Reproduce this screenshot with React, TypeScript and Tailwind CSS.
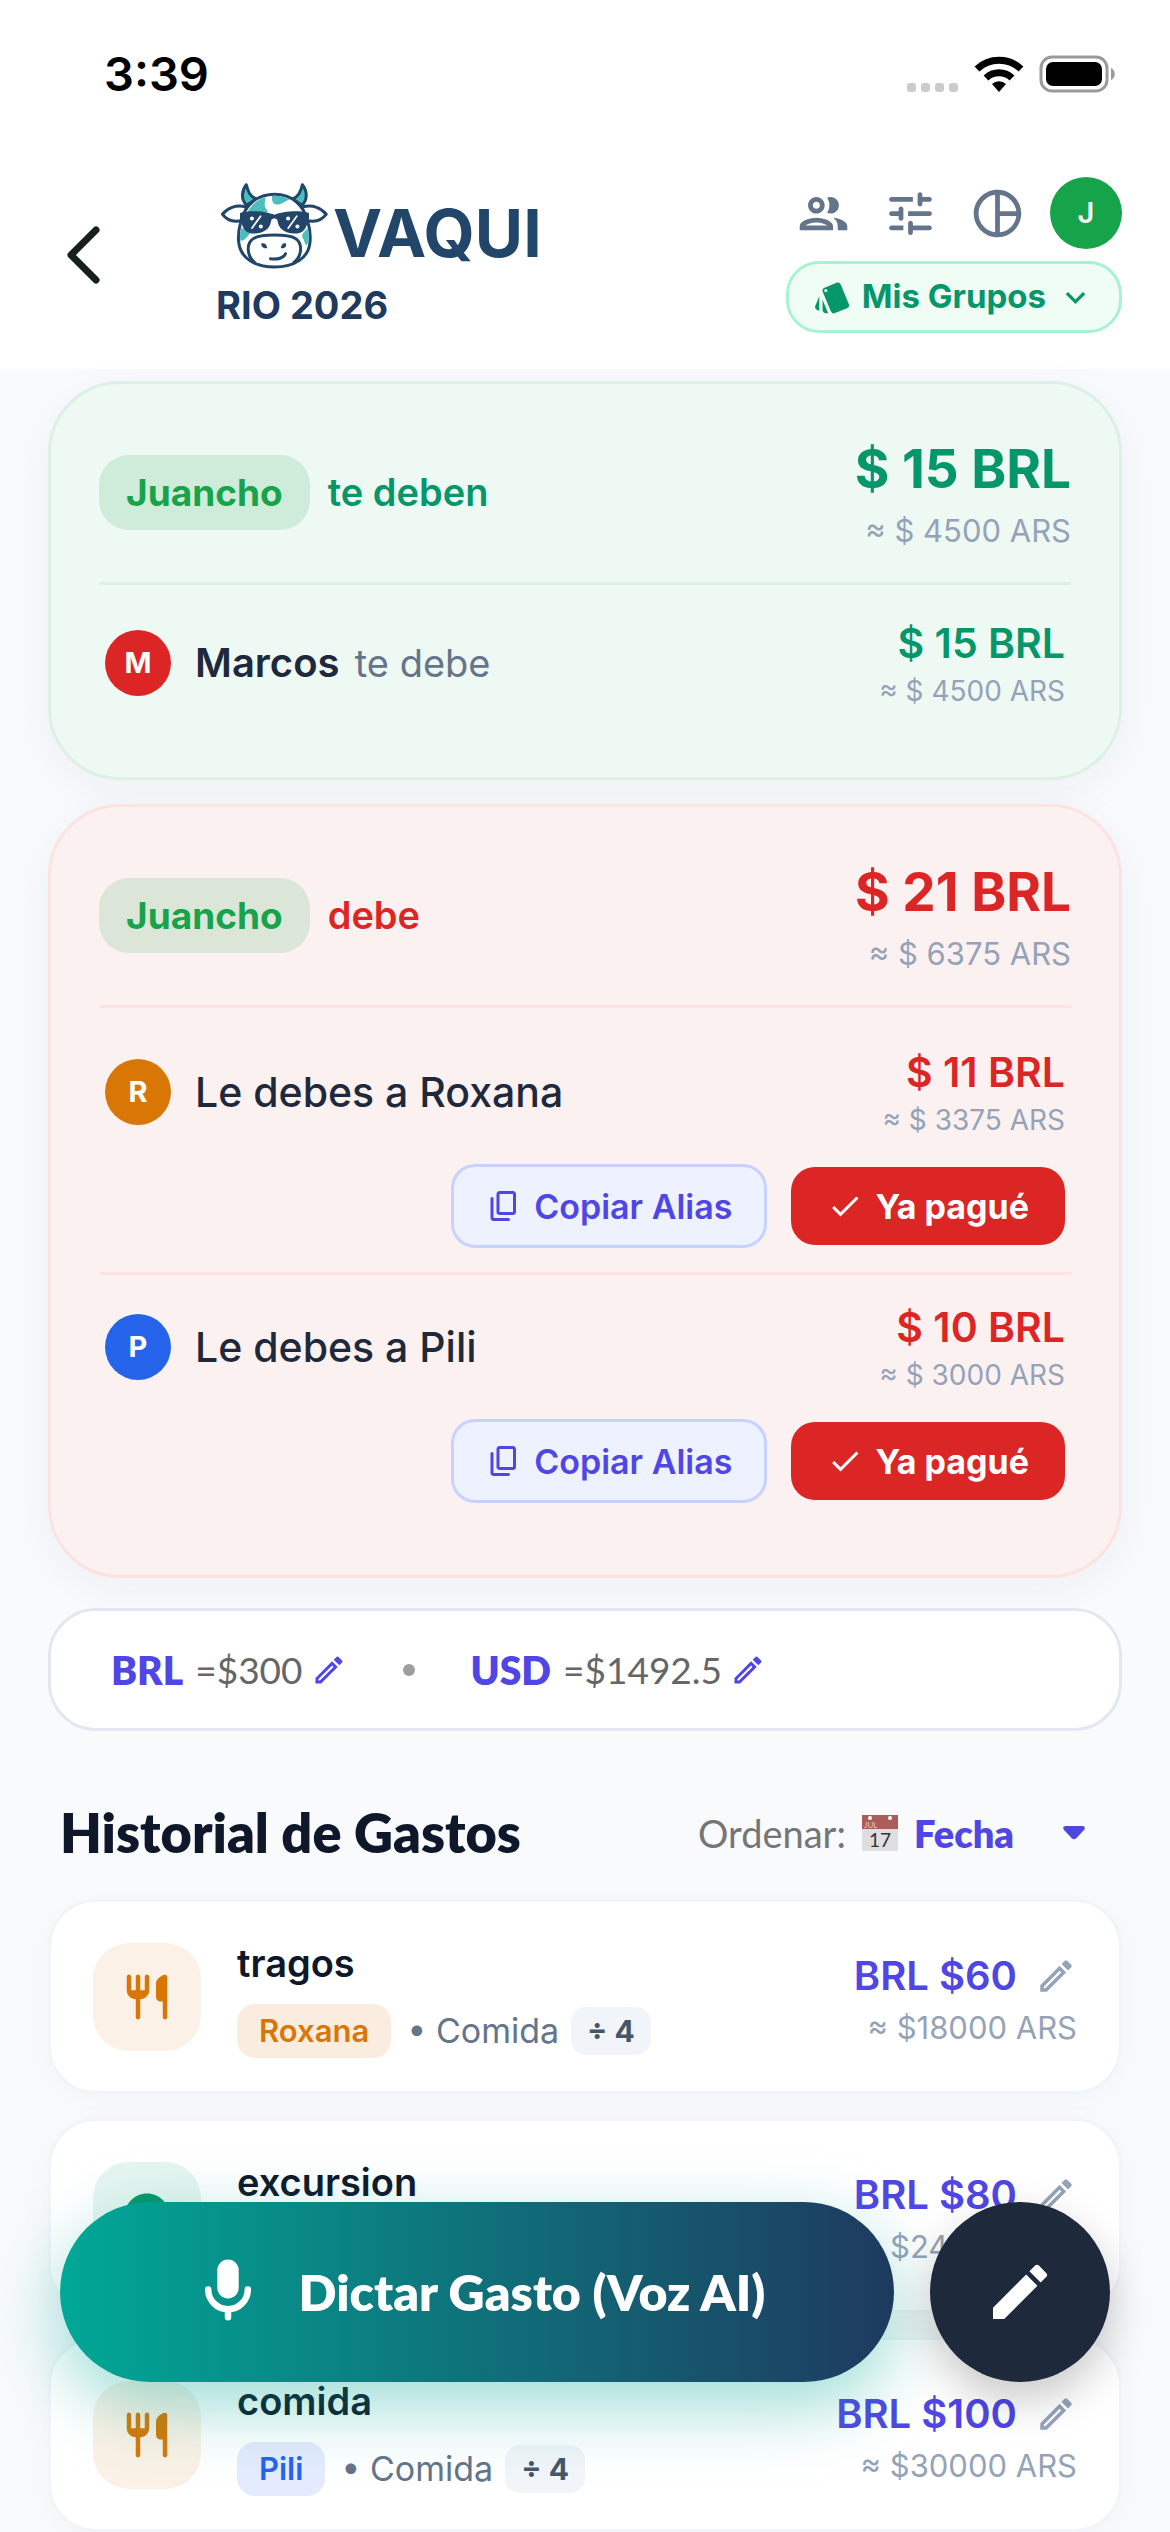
import type { ReactNode } from 'react';
import {
  MdCheck,
  MdExplore,
  MdKeyboardArrowDown,
  MdModeEdit,
  MdOutlineModeEdit,
  MdPieChartOutline,
  MdStyle,
} from 'react-icons/md';

type Tone = 'green' | 'red';

const toneCard = {
  green: 'bg-[#eef9f3] border-[#dcf0e6]',
  red: 'bg-[#fcf1f1] border-[#fde2e2]',
};
const toneLine = { green: 'border-[#dcf0e6]', red: 'border-[#fde2e2]' };
const toneText = { green: 'text-[#059669]', red: 'text-[#dc2626]' };

const debts = [
  { name: 'Roxana', initial: 'R', color: 'bg-[#d97706]', amount: '$ 11 BRL', ars: '≈ $ 3375 ARS' },
  { name: 'Pili', initial: 'P', color: 'bg-[#2563eb]', amount: '$ 10 BRL', ars: '≈ $ 3000 ARS' },
];

type Expense = {
  title: string;
  tile: string;
  icon: ReactNode;
  amount: string;
  ars: string;
  detail?: { payer: string; chip: string; category: string; split: string };
};

const expenses: Expense[] = [
  {
    title: 'tragos',
    tile: 'bg-[#fbf1e6] text-[#d97706]',
    icon: <ForkKnife />,
    amount: 'BRL $60',
    ars: '≈ $18000 ARS',
    detail: { payer: 'Roxana', chip: 'bg-[#faeddf] text-[#d97706]', category: 'Comida', split: '÷ 4' },
  },
  {
    title: 'excursion',
    tile: 'bg-[#e6f5f0] text-[#059669]',
    icon: <MdExplore className="size-[54px]" />,
    amount: 'BRL $80',
    ars: '≈ $24000 ARS',
  },
  {
    title: 'comida',
    tile: 'bg-[#fbf1e6] text-[#d97706]',
    icon: <ForkKnife />,
    amount: 'BRL $100',
    ars: '≈ $30000 ARS',
    detail: { payer: 'Pili', chip: 'bg-[#e5ebfe] text-[#2563eb]', category: 'Comida', split: '÷ 4' },
  },
];

function ForkKnife() {
  return (
    <svg viewBox="0 0 24 24" className="size-[54px]" fill="currentColor" aria-hidden="true">
      <path d="M16 6v6c0 1.1.9 2 2 2h1v7c0 .55.45 1 1 1s1-.45 1-1V3.13c0-.65-.61-1.13-1.24-.98C17.6 2.68 16 4.51 16 6zm-5 3H9V3c0-.55-.45-1-1-1s-1 .45-1 1v6H5V3c0-.55-.45-1-1-1s-1 .45-1 1v6c0 2.21 1.79 4 4 4v8c0 .55.45 1 1 1s1-.45 1-1v-8c2.21 0 4-1.79 4-4V3c0-.55-.45-1-1-1s-1 .45-1 1v6z" />
    </svg>
  );
}

function PeopleIcon() {
  return (
    <svg viewBox="0 0 24 24" className="size-[57px]" fill="currentColor" aria-hidden="true">
      <path d="M9 13.75c-2.34 0-7 1.17-7 3.5V19h14v-1.75c0-2.33-4.66-3.5-7-3.5zM4.34 17c.84-.58 2.87-1.25 4.66-1.25s3.82.67 4.66 1.25H4.34zM9 12c1.93 0 3.5-1.57 3.5-3.5S10.93 5 9 5 5.5 6.57 5.5 8.5 7.07 12 9 12zm0-5c.83 0 1.5.67 1.5 1.5S9.83 10 9 10s-1.5-.67-1.5-1.5S8.17 7 9 7zm7.04 6.81c1.16.84 1.96 1.96 1.96 3.44V19h4v-1.75c0-2.02-3.5-3.17-5.96-3.44zM15 12c1.93 0 3.5-1.57 3.5-3.5S16.93 5 15 5c-.54 0-1.04.13-1.5.35.63.89 1 1.98 1 3.15s-.37 2.26-1 3.15c.46.22.96.35 1.5.35z" />
    </svg>
  );
}

function TuneIcon() {
  return (
    <svg viewBox="0 0 24 24" className="size-[57px]" fill="currentColor" aria-hidden="true">
      <path d="M3 18c0 .55.45 1 1 1h5v-2H4c-.55 0-1 .45-1 1zM3 6c0 .55.45 1 1 1h9V5H4c-.55 0-1 .45-1 1zm10 14v-1h7c.55 0 1-.45 1-1s-.45-1-1-1h-7v-1c0-.55-.45-1-1-1s-1 .45-1 1v4c0 .55.45 1 1 1s1-.45 1-1zM7 10v1H4c-.55 0-1 .45-1 1s.45 1 1 1h3v1c0 .55.45 1 1 1s1-.45 1-1v-4c0-.55-.45-1-1-1s-1 .45-1 1zm14 2c0-.55-.45-1-1-1h-9v2h9c.55 0 1-.45 1-1zm-5-3c.55 0 1-.45 1-1V7h3c.55 0 1-.45 1-1s-.45-1-1-1h-3V4c0-.55-.45-1-1-1s-1 .45-1 1v4c0 .55.45 1 1 1z" />
    </svg>
  );
}

function CopyIcon() {
  return (
    <svg viewBox="0 0 24 24" className="size-9" fill="currentColor" aria-hidden="true">
      <path d="M9 18q-.825 0-1.4125-.5875T7 16V4q0-.825.5875-1.4125T9 2h9q.825 0 1.4125.5875T20 4v12q0 .825-.5875 1.4125T18 18H9Zm0-2h9V4H9v12Zm-4 6q-.825 0-1.4125-.5875T3 20V7q0-.425.2875-.7125T4 6q.425 0 .7125.2875T5 7v13h10q.425 0 .7125.2875T16 21q0 .425-.2875.7125T15 22H5Z" />
    </svg>
  );
}

function MicIcon() {
  return (
    <svg viewBox="0 0 24 24" className="size-[78px]" fill="currentColor" aria-hidden="true">
      <rect x="8.7" y="2" width="6.6" height="12" rx="3.3" />
      <path d="M5.900 11.2a6.100 6.100 0 0 0 12.200 0M12 17.500V19.800" fill="none" stroke="currentColor" strokeWidth="2" strokeLinecap="round" />
    </svg>
  );
}

function CowLogo() {
  return (
    <svg viewBox="58 50 326 262" className="h-[87px] w-[109px]" aria-hidden="true">
      <g fill="#fff" stroke="#21466a" strokeWidth="9" strokeLinejoin="round" strokeLinecap="round">
        <path d="M136 58C120 80 121 104 137 120L166 101C147 94 141 78 136 58Z" fill="#4dbdbe" />
        <path d="M305 58C321 80 320 104 304 120L275 101C294 94 300 78 305 58Z" fill="#4dbdbe" />
        <path d="M137 126C104 116 78 130 64 147C78 166 100 173 126 165Z" />
        <path d="M304 126C337 116 363 130 377 147C363 166 341 173 315 165Z" />
        <path d="M221 87C170 87 130 118 118 175C112 198 111 210 113 230C118 280 162 306 221 306C280 306 324 280 328 230C330 210 329 198 323 175C311 118 272 87 221 87Z" />
      </g>
      <g fill="#4dbdbe">
        <path d="M194 95C168 103 146 124 140 142L198 142C208 138 188 132 192 112Z" />
        <path d="M214 92C211 112 221 121 237 117C251 113 252 108 267 103C252 94 232 90 214 92Z" />
        <path d="M121 188C117 204 116 214 118 227C136 226 141 210 149 203Z" />
        <path d="M322 190C308 201 300 209 307 220C313 229 311 240 319 240C326 225 326 208 322 190Z" />
      </g>
      <g fill="none" stroke="#21466a" strokeWidth="9" strokeLinecap="round">
        <path d="M163 294C138 276 134 234 158 220C180 206 262 206 284 220C307 234 304 276 278 294" fill="#fff" />
        <path d="M209 281C230 284 249 279 254 266" />
      </g>
      <g fill="#21466a">
        <path d="M117 143C145 134 197 138 221 149C245 138 296 134 325 143L325 160C318 168 322 200 290 205C252 208 233 190 230 166C226 158 215 158 211 166C208 190 189 208 152 205C120 200 124 168 117 160Z" />
        <path d="M181 236C188 232 198 236 199 249C191 252 180 246 181 236Z" />
        <path d="M256 236C249 232 241 238 240 249C249 252 258 246 256 236Z" />
      </g>
      <g stroke="#fff" strokeWidth="5" strokeLinecap="round">
        <path d="M153 189L179 153M262 189L288 153" />
      </g>
      <g fill="#fff">
        <circle cx="153" cy="160" r="6" />
        <circle cx="180" cy="184" r="6" />
        <circle cx="262" cy="160" r="6" />
        <circle cx="290" cy="184" r="6" />
      </g>
    </svg>
  );
}

function StatusBar() {
  return (
    <div className="flex h-[141px] items-center justify-between pt-[6px] pr-[54px] pl-[104px]">
      <span className="text-[47px] leading-none font-semibold text-black">3:39</span>
      <svg viewBox="0 0 210 38" className="h-[38px] w-[210px]" aria-hidden="true">
        <g fill="#cbcbcb">
          <rect x="1" y="28" width="9" height="9" rx="3" />
          <rect x="15" y="28" width="9" height="9" rx="3" />
          <rect x="29" y="28" width="9" height="9" rx="3" />
          <rect x="43" y="28" width="9" height="9" rx="3" />
        </g>
        <g fill="none" stroke="#000" strokeWidth="7">
          <path d="M71 14A32 32 0 0 1 115 14" />
          <path d="M80 23A19 19 0 0 1 106 23" />
        </g>
        <path d="M86 29A10 10 0 0 1 100 29L93 37Z" fill="#000" />
        <rect x="135" y="2" width="66" height="34" rx="11" fill="none" stroke="#9a9a9a" strokeWidth="3" />
        <rect x="140" y="7" width="56" height="24" rx="7" fill="#000" />
        <path d="M205 13C210 15 210 23 205 25Z" fill="#9a9a9a" />
      </svg>
    </div>
  );
}

function Header() {
  return (
    <header className="bg-white">
      <StatusBar />
      <div className="flex items-center justify-between py-9 pr-12 pl-[60px]">
        <div className="flex items-center">
          <button type="button" aria-label="Volver" className="w-[156px] text-[#17201c]">
            <svg viewBox="0 0 48 66" className="h-[66px] w-12" fill="none" stroke="currentColor" strokeWidth="7" strokeLinecap="round" strokeLinejoin="round">
              <path d="M36 8L11 33L36 58" />
            </svg>
          </button>
          <div className="flex flex-col gap-3">
            <div className="flex items-end gap-1 pl-1">
              <CowLogo />
              <span className="text-[66px] leading-[72px] font-bold text-[#21466a]">VAQUI</span>
            </div>
            <h1 className="text-[38px] leading-[48px] font-bold text-[#1e3a5f]">RIO 2026</h1>
          </div>
        </div>
        <div className="flex flex-col items-end gap-3">
          <div className="flex items-center gap-6 text-[#64748b]">
            <div className="flex items-center gap-[30px]">
              <button type="button" aria-label="Miembros">
                <PeopleIcon />
              </button>
              <button type="button" aria-label="Ajustes">
                <TuneIcon />
              </button>
              <button type="button" aria-label="Estadísticas">
                <MdPieChartOutline className="size-[57px]" />
              </button>
            </div>
            <button type="button" className="flex size-[72px] items-center justify-center rounded-full bg-[#16a34a] text-[29px] font-semibold text-white">
              J
            </button>
          </div>
          <button type="button" className="flex h-[72px] items-center gap-[10px] rounded-[33px] border-3 border-[#a7f3d0] bg-[#f0fdf5] px-6 text-[33px] font-bold text-[#059669]">
            <MdStyle className="size-[39px]" />
            Mis Grupos
            <MdKeyboardArrowDown className="size-[39px]" />
          </button>
        </div>
      </div>
    </header>
  );
}

type BalanceCardProps = { tone: Tone; verb: string; amount: string; ars: string; children: ReactNode };

function BalanceCard({ tone, verb, amount, ars, children }: BalanceCardProps) {
  return (
    <section className={`rounded-[72px] border-3 px-12 py-12 shadow-[0_12px_48px_rgba(30,58,95,0.05)] ${toneCard[tone]}`}>
      <div className={`flex items-center justify-between border-b-3 pb-[30px] ${toneLine[tone]}`}>
        <div className="flex items-center gap-[18px]">
          <span className="rounded-[30px] bg-[#16a34a]/14 px-[27px] py-[15px] text-[37px] leading-[45px] font-bold text-[#16a34a]">
            Juancho
          </span>
          <span className={`text-[38px] leading-[45px] font-semibold ${toneText[tone]}`}>{verb}</span>
        </div>
        <div className="flex flex-col gap-[3px] text-right">
          <span className={`text-[53px] leading-[75px] font-bold ${toneText[tone]}`}>{amount}</span>
          <span className="text-[31px] leading-[42px] text-[#94a3b8]">{ars}</span>
        </div>
      </div>
      <div className="pt-3">{children}</div>
    </section>
  );
}

type PersonRowProps = { tone: Tone; color: string; initial: string; amount: string; ars: string; children: ReactNode };

function PersonRow({ tone, color, initial, amount, ars, children }: PersonRowProps) {
  return (
    <div className="flex items-center justify-between px-[6px]">
      <div className="flex items-center gap-6">
        <span className={`flex size-[66px] items-center justify-center rounded-full text-[29px] font-bold text-white ${color}`}>
          {initial}
        </span>
        <p className="text-[40px] leading-[54px] text-[#1e293b]">{children}</p>
      </div>
      <div className="flex flex-col gap-[2px] pt-[2px] text-right">
        <span className={`text-[41px] leading-[52px] font-semibold ${toneText[tone]}`}>{amount}</span>
        <span className="text-[28px] leading-10 text-[#94a3b8]">{ars}</span>
      </div>
    </div>
  );
}

function Rate({ code, value }: { code: string; value: string }) {
  return (
    <div className="flex items-center">
      <span className="mr-3 text-[39px] leading-[54px] font-extrabold text-[#4f46e5]">{code}</span>
      <span className="text-[37px] leading-[54px] text-[#666]">={value}</span>
      <button type="button" aria-label={`Editar ${code}`} className="ml-2 text-[#4f46e5]">
        <MdOutlineModeEdit className="size-9" />
      </button>
    </div>
  );
}

function CalendarEmoji() {
  return (
    <svg viewBox="0 0 36 36" className="size-9" aria-hidden="true">
      <rect width="36" height="36" rx="1" fill="#dedede" />
      <rect width="36" height="14" fill="#ad5c5c" />
      <circle cx="8" cy="3" r="2" fill="#fff" />
      <circle cx="28" cy="3" r="2" fill="#fff" />
      <text x="2" y="13" fontSize="8" fill="#e6caca">JUL</text>
      <text x="18" y="32" fontSize="19" textAnchor="middle" fill="#333">17</text>
    </svg>
  );
}

function ExpenseItem({ title, tile, icon, amount, ars, detail }: Expense) {
  return (
    <li className="flex h-[195px] items-center rounded-[48px] border-3 border-[#f1f5f9] bg-white px-[42px] shadow-[0_6px_36px_rgba(15,23,42,0.03)]">
      <span className={`flex size-[108px] items-center justify-center rounded-[36px] ${tile}`}>{icon}</span>
      <div className="ml-9 flex flex-1 flex-col gap-[14px]">
        <h3 className="text-[38px] leading-[54px] font-semibold text-[#0f172a]">{title}</h3>
        <div className="flex min-h-[54px] items-center text-[34px] leading-[54px] text-[#64748b]">
          {detail && (
            <>
              <span className={`rounded-[18px] px-[22px] text-[31px] font-semibold ${detail.chip}`}>{detail.payer}</span>
              <span className="ml-4">• {detail.category}</span>
              <span className="ml-3 rounded-[15px] bg-[#f1f5f9] px-4 text-[30px] leading-[48px] font-bold text-[#475569]">
                {detail.split}
              </span>
            </>
          )}
        </div>
      </div>
      <div className="flex flex-col gap-[3px] pt-[9px]">
        <div className="flex items-center justify-end gap-[18px]">
          <span className="text-[40px] leading-[51px] font-semibold text-[#4f46e5]">{amount}</span>
          <button type="button" aria-label={`Editar ${title}`} className="text-[#94a3b8]">
            <MdOutlineModeEdit className="size-[42px]" />
          </button>
        </div>
        <span className="text-right text-[31px] leading-[48px] text-[#94a3b8]">{ars}</span>
      </div>
    </li>
  );
}

export default function App() {
  return (
    <div className="min-h-screen overflow-hidden bg-[#f8fafc] font-[Inter,sans-serif]">
      <Header />
      <main className="flex flex-col gap-6 px-12 pt-3">
        <BalanceCard tone="green" verb="te deben" amount="$ 15 BRL" ars="≈ $ 4500 ARS">
          <div className="py-[18px]">
            <PersonRow tone="green" color="bg-[#dc2626]" initial="M" amount="$ 15 BRL" ars="≈ $ 4500 ARS">
              <span className="font-semibold">Marcos</span>{' '}
              <span className="ml-1 text-[38px] text-[#64748b]">te debe</span>
            </PersonRow>
          </div>
        </BalanceCard>

        <BalanceCard tone="red" verb="debe" amount="$ 21 BRL" ars="≈ $ 6375 ARS">
          {debts.map((debt) => (
            <div key={debt.name} className="border-b-3 border-[#fde2e2] py-6 last:border-b-0">
              <PersonRow tone="red" color={debt.color} initial={debt.initial} amount={debt.amount} ars={debt.ars}>
                <span className="text-[41px] font-medium">Le debes a {debt.name}</span>
              </PersonRow>
              <div className="mt-6 flex items-center justify-end gap-6 pr-[6px]">
                <button type="button" className="flex h-[84px] items-center gap-3 rounded-3xl border-3 border-[#c7d2fe] bg-[#eef2ff] px-8 text-[34px] font-semibold text-[#4f46e5]">
                  <CopyIcon />
                  Copiar Alias
                </button>
                <button type="button" className="flex h-[78px] items-center gap-3 rounded-3xl bg-[#dc2626] px-9 text-[34px] font-bold text-white">
                  <MdCheck className="size-9" />
                  Ya pagué
                </button>
              </div>
            </div>
          ))}
        </BalanceCard>

        <section className="mt-[6px] flex h-[123px] items-center rounded-[48px] border-3 border-[#e2e8f0] bg-white px-[60px] font-[Lato,sans-serif]">
          <Rate code="BRL" value="$300" />
          <span className="mx-14 size-3 rounded-full bg-[#9e9e9e]" />
          <Rate code="USD" value="$1492.5" />
        </section>

        <div className="mt-[42px] flex h-[72px] items-center justify-between pr-9 pl-3 font-[Lato,sans-serif]">
          <h2 className="text-[54px] leading-[60px] font-extrabold text-[#0f172a]">Historial de Gastos</h2>
          <div className="flex items-center text-[38px] leading-[48px]">
            <label htmlFor="sort" className="mr-4 text-[#757575]">Ordenar:</label>
            <CalendarEmoji />
            <select id="sort" className="field-sizing-content ml-4 appearance-none bg-transparent font-extrabold text-[#4f46e5]">
              <option>Fecha</option>
            </select>
            <svg viewBox="0 0 24 14" className="ml-12 h-[14px] w-6 text-[#4f46e5]" aria-hidden="true">
              <path d="M3 0H21Q24 1 22 4L14 12.500Q12 14 10 12.500L2 4Q0 1 3 0Z" fill="currentColor" />
            </svg>
          </div>
        </div>

        <ul className="mt-[6px] flex flex-col gap-6">
          {expenses.map((expense) => (
            <ExpenseItem key={expense.title} {...expense} />
          ))}
        </ul>
      </main>

      {/* floating actions */}
      <div className="fixed inset-x-[60px] bottom-[150px] flex gap-9">
        <button type="button" className="flex h-[180px] flex-1 items-center justify-center gap-8 rounded-full bg-[linear-gradient(90deg,#00a896,#1e3a5f)] font-[Lato,sans-serif] text-[50px] font-extrabold text-white shadow-[0_24px_72px_rgba(0,168,150,0.4)]">
          <MicIcon />
          Dictar Gasto (Voz AI)
        </button>
        <button type="button" aria-label="Agregar gasto" className="flex size-[180px] items-center justify-center rounded-full bg-[#1e293b] text-white shadow-[0_18px_45px_rgba(0,0,0,0.22)]">
          <MdModeEdit className="size-[72px]" />
        </button>
      </div>
    </div>
  );
}
